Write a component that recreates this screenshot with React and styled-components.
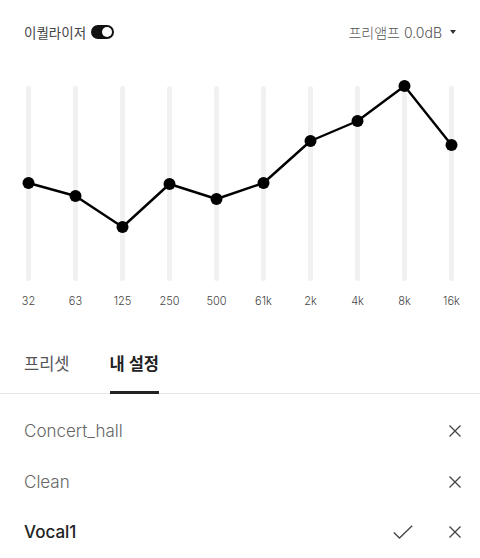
import React from 'react';
import styled, { createGlobalStyle } from 'styled-components';

const GlobalStyle = createGlobalStyle`
  body {
    margin: 0;
    background: #fff;
    font-family: Inter, "Noto Sans CJK KR", sans-serif;
  }
`;

const Page = styled.div`
  width: 480px;
  height: 558px;
  overflow: hidden;
  background: #fff;
`;

const Header = styled.div`
  height: 64px;
  padding: 0 24px;
  display: flex;
  align-items: center;
  justify-content: space-between;
`;

const Title = styled.div`
  display: flex;
  align-items: center;
  gap: 5px;
  font-size: 13.5px;
  color: #444;
`;

const Toggle = styled.div`
  width: 23px;
  height: 14px;
  border-radius: 7px;
  background: #111;
  display: flex;
  align-items: center;
  justify-content: flex-end;
  padding: 0 2px;
  box-sizing: border-box;
  &::after {
    content: '';
    width: 10px;
    height: 10px;
    border-radius: 50%;
    background: #fff;
  }
`;

const Preamp = styled.div`
  display: flex;
  align-items: center;
  gap: 8px;
  font-size: 14px;
  font-weight: 300;
  color: #555;
`;

const Caret = styled.span`
  width: 0;
  height: 0;
  border-left: 3px solid transparent;
  border-right: 3px solid transparent;
  border-top: 4px solid #333;
  margin-top: -1px;
`;

const Chart = styled.div`
  position: relative;
  padding: 22px 5px 0;
  display: flex;
`;

const Band = styled.div`
  flex: 1;
  display: flex;
  flex-direction: column;
  align-items: center;
`;

const Track = styled.div`
  width: 5px;
  height: 195px;
  border-radius: 3px;
  background: #f1f1f1;
`;

const BandLabel = styled.div`
  margin-top: 13px;
  font-size: 11px;
  line-height: 14px;
  font-weight: 300;
  color: #444;
`;

const Curve = styled.svg`
  position: absolute;
  left: 0;
  top: 0;
  pointer-events: none;
`;

const Tabs = styled.div`
  margin-top: 23px;
  display: flex;
  gap: 40px;
  padding: 0 24px;
  border-bottom: 1px solid #e6e6e6;
`;

const Tab = styled.div`
  height: 63px;
  display: flex;
  align-items: center;
  font-size: 16.5px;
  font-weight: ${p => (p.active ? 700 : 400)};
  color: ${p => (p.active ? '#222' : '#555')};
  border-bottom: 3px solid ${p => (p.active ? '#222' : 'transparent')};
  box-sizing: border-box;
  padding-top: 3px;
  margin-bottom: -1px;
`;

const List = styled.div`
  padding-top: 12px;
`;

const Row = styled.div`
  height: 50.5px;
  padding: 0 19px 0 24px;
  display: flex;
  align-items: center;
`;

const Name = styled.div`
  flex: 1;
  font-size: 17px;
  color: ${p => (p.selected ? '#222' : '#666')};
  font-weight: ${p => (p.selected ? 500 : 300)};
`;

const Icons = styled.div`
  display: flex;
  align-items: center;
  gap: 36px;
`;

const bands = [
  { label: '32', y: 183 },
  { label: '63', y: 196 },
  { label: '125', y: 227 },
  { label: '250', y: 184 },
  { label: '500', y: 199 },
  { label: '61k', y: 183 },
  { label: '2k', y: 141 },
  { label: '4k', y: 121 },
  { label: '8k', y: 86 },
  { label: '16k', y: 145 },
];

const presets = [
  { name: 'Concert_hall' },
  { name: 'Clean' },
  { name: 'Vocal1', selected: true },
];

const CloseIcon = () => (
  <svg width="12" height="12" viewBox="0 0 12 12">
    <path d="M0.5 0.5 L11.5 11.5 M11.5 0.5 L0.5 11.5" stroke="#444" strokeWidth="1.3" fill="none" />
  </svg>
);

const CheckIcon = () => (
  <svg width="20" height="14" viewBox="0 0 20 14">
    <path d="M0.8 7.5 L6.5 13 L19.2 0.8" stroke="#444" strokeWidth="1.3" fill="none" />
  </svg>
);

export default function App() {
  // chart top on page is 64, so shift y values into chart coords
  const pts = bands.map((b, i) => [28.5 + 47 * i, b.y - 64]);
  const line = pts.map(p => p.join(',')).join(' ');

  return (
    <Page>
      <GlobalStyle />
      <Header>
        <Title>
          이퀄라이저
          <Toggle />
        </Title>
        <Preamp>
          프리앰프 0.0dB
          <Caret />
        </Preamp>
      </Header>
      <Chart>
        {bands.map(b => (
          <Band key={b.label}>
            <Track />
            <BandLabel>{b.label}</BandLabel>
          </Band>
        ))}
        <Curve width="480" height="240">
          <polyline points={line} fill="none" stroke="#000" strokeWidth="2.4" strokeLinejoin="round" />
          {pts.map(([x, y], i) => (
            <circle key={i} cx={x} cy={y} r="6" fill="#000" />
          ))}
        </Curve>
      </Chart>
      <Tabs>
        <Tab>프리셋</Tab>
        <Tab active>내 설정</Tab>
      </Tabs>
      <List>
        {presets.map(p => (
          <Row key={p.name}>
            <Name selected={p.selected}>{p.name}</Name>
            <Icons>
              {p.selected && <CheckIcon />}
              <CloseIcon />
            </Icons>
          </Row>
        ))}
      </List>
    </Page>
  );
}
